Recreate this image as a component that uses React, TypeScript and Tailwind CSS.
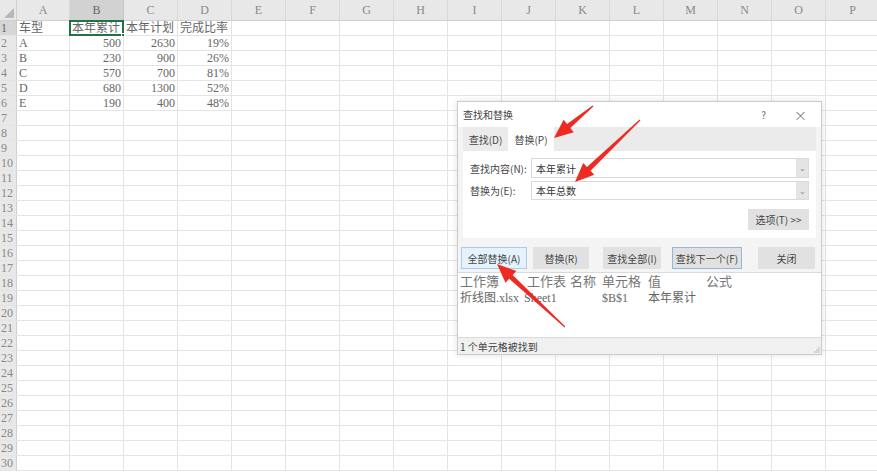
import React from 'react';

const COLS = ['A', 'B', 'C', 'D', 'E', 'F', 'G', 'H', 'I', 'J', 'K', 'L', 'M', 'N', 'O', 'P'];

// cell contents, index 0 = column A
const DATA: Record<number, string[]> = {
  1: ['车型', '本年累计', '本年计划', '完成比率'],
  2: ['A', '500', '2630', '19%'],
  3: ['B', '230', '900', '26%'],
  4: ['C', '570', '700', '81%'],
  5: ['D', '680', '1300', '52%'],
  6: ['E', '190', '400', '48%'],
};

const ROWS = Array.from({ length: 30 }, (_, i) => i + 1);

const arrowPoints = (tx: number, ty: number, px: number, py: number) => {
  const dx = px - tx;
  const dy = py - ty;
  const len = Math.hypot(dx, dy);
  const ux = dx / len;
  const uy = dy / len;
  const nx = -uy;
  const ny = ux;
  const hl = 19;
  const hw = 8;
  const sw = 2.6;
  const bx = px - ux * hl;
  const by = py - uy * hl;
  const pts = [
    [tx + nx * 0.6, ty + ny * 0.6],
    [bx + nx * sw, by + ny * sw],
    [bx + nx * hw, by + ny * hw],
    [px, py],
    [bx - nx * hw, by - ny * hw],
    [bx - nx * sw, by - ny * sw],
    [tx - nx * 0.6, ty - ny * 0.6],
  ];
  return pts.map((p) => p.join(',')).join(' ');
};

const HeaderRow = () => (
  <div className="flex h-[21px] bg-[#e8e8e8] border-b border-[#d0d0d0]">
    <div className="relative w-[17px] shrink-0 border-r border-[#d0d0d0]">
      <svg className="absolute right-[2px] bottom-[2px]" width="10" height="10" viewBox="0 0 10 10">
        <polygon points="10,0 10,10 0,10" fill="#b8b8b8" />
      </svg>
    </div>
    {COLS.map((c) => (
      <div
        key={c}
        className={
          c === 'B'
            ? 'flex w-[54px] shrink-0 items-center justify-center border-r border-[#c4c4c4] bg-[#d2d2d2] text-[12px] text-[#666]'
            : c === 'A'
            ? 'flex w-[53px] shrink-0 items-center justify-center border-r border-[#d8d8d8] text-[12px] text-[#888]'
            : 'flex w-[54px] shrink-0 items-center justify-center border-r border-[#d8d8d8] text-[12px] text-[#888]'
        }
      >
        {c}
      </div>
    ))}
  </div>
);

const GridRow = ({ r }: { r: number }) => {
  const vals = DATA[r] || [];
  return (
    <div className="flex h-[15px] border-b border-[#e4e4e4]">
      <div
        className={
          r === 1
            ? 'flex w-[17px] shrink-0 items-center bg-[#d6d6d6] pl-[1px] text-[12px] leading-none text-[#666] border-r border-[#c8c8c8]'
            : 'flex w-[17px] shrink-0 items-center bg-[#e8e8e8] pl-[1px] text-[12px] leading-none text-[#888] border-r border-[#d0d0d0]'
        }
      >
        {r}
      </div>
      {COLS.map((c, i) => {
        const v = vals[i] ?? '';
        const isNum = r > 1 && i > 0;
        return (
          <div
            key={c}
            className={
              (c === 'A' ? 'w-[53px] ' : 'w-[54px] ') +
              (isNum
                ? 'relative flex shrink-0 items-center justify-end border-r border-[#e4e4e4] pr-[2px] text-[12px] leading-none text-[#666] whitespace-nowrap'
                : 'relative flex shrink-0 items-center border-r border-[#e4e4e4] pl-[2px] text-[12px] leading-none text-[#666] whitespace-nowrap')
            }
          >
            {v}
            {r === 1 && c === 'B' && (
              <div className="absolute -left-[1px] -top-[1px] -right-[1px] -bottom-[1px] border-2 border-[#217346]">
                <div className="absolute -right-[3px] -bottom-[3px] h-[4px] w-[4px] bg-[#217346] border border-white" />
              </div>
            )}
          </div>
        );
      })}
    </div>
  );
};

const Btn = ({ label, w, kind }: { label: string; w: string; kind?: 'active' | 'focus' }) => (
  <div
    className={
      (kind === 'active'
        ? 'bg-[#e5f1fb] border-[#a8cdee] '
        : kind === 'focus'
        ? 'bg-[#e1e1e1] border-[#8fb9e3] '
        : 'bg-[#e1e1e1] border-[#e1e1e1] ') +
      w +
      ' flex h-[22px] items-center justify-center border text-[10px] text-[#444]'
    }
  >
    {label}
  </div>
);

const Field = ({ label, value, h }: { label: string; value: string; h: string }) => (
  <div className="flex items-center">
    <div className="w-[61px] shrink-0 text-[10px] text-[#444]">{label}</div>
    <div className={h + ' flex flex-1 items-center border border-[#d9d9d9] bg-white'}>
      <div className="flex-1 pl-[4px] text-[10px] text-[#333]">{value}</div>
      <div className="flex h-full w-[12px] items-center justify-center bg-[#e4e4e4] text-[8px] text-[#888]">⌄</div>
    </div>
  </div>
);

const Dialog = () => (
  <div className="absolute left-[457px] top-[101px] flex h-[254px] w-[365px] flex-col border border-[#cccccc] bg-[#f4f4f4] font-['Noto_Sans_CJK_SC',sans-serif] shadow-[0_0_6px_rgba(0,0,0,0.12)]">
    <div className="flex h-[25px] items-center bg-white pl-[5px] pr-[14px] text-[10px] text-[#444]">
      <span className="flex-1">查找和替换</span>
      <span className="mr-[28px] text-[10px] text-[#666]">?</span>
      <span className="text-[13px] font-light leading-none text-[#555]">×</span>
    </div>
    <div className="mx-[5px] flex h-[24px] items-end bg-[#ebebeb]">
      <div className="flex h-[24px] w-[45px] items-center justify-center text-[10px] text-[#444]">查找(D)</div>
      <div className="flex h-[24px] w-[46px] items-center justify-center bg-white text-[10px] text-[#444]">替换(P)</div>
    </div>
    <div className="mx-[5px] flex h-[87px] flex-col bg-white px-[7px] pt-[7px]">
      <Field label="查找内容(N):" value="本年累计" h="h-[20px]" />
      <div className="mt-[3px]">
        <Field label="替换为(E):" value="本年总数" h="h-[19px]" />
      </div>
      <div className="mt-[9px] flex justify-end">
        <div className="flex h-[21px] w-[61px] items-center justify-center bg-[#e1e1e1] text-[10px] text-[#444]">选项(T) &gt;&gt;</div>
      </div>
    </div>
    <div className="mt-[9px] flex items-center pl-[3px] pr-[6px]">
      <Btn label="全部替换(A)" w="w-[68px]" kind="active" />
      <div className="ml-[6px]"><Btn label="替换(R)" w="w-[56px]" /></div>
      <div className="ml-[14px]"><Btn label="查找全部(I)" w="w-[58px]" /></div>
      <div className="ml-[11px]"><Btn label="查找下一个(F)" w="w-[70px]" kind="focus" /></div>
      <div className="ml-[16px]"><Btn label="关闭" w="w-[57px]" /></div>
    </div>
    <div className="mt-[3px] flex-1 border-t border-[#dadada] bg-white pl-[2px] pt-[1px] font-['Liberation_Serif','Noto_Sans_CJK_SC',serif] text-[#777]">
      <div className="flex h-[16px] items-center text-[13px]">
        <span className="w-[67px]">工作簿</span>
        <span className="w-[43px]">工作表</span>
        <span className="w-[32px]">名称</span>
        <span className="w-[46px]">单元格</span>
        <span className="w-[58px]">值</span>
        <span>公式</span>
      </div>
      <div className="flex h-[16px] items-center text-[12px] text-[#666]">
        <span className="w-[64px]">折线图.xlsx</span>
        <span className="w-[78px]">Sheet1</span>
        <span className="w-[46px]">$B$1</span>
        <span>本年累计</span>
      </div>
    </div>
    <div className="relative flex h-[17px] items-center border-t border-[#dadada] bg-[#f0f0f0] pl-[2px] text-[10px] text-[#444]">
      1 个单元格被找到
      <svg className="absolute right-[1px] bottom-[1px]" width="7" height="7" viewBox="0 0 7 7">
        <circle cx="6" cy="2" r="0.7" fill="#aaa" />
        <circle cx="6" cy="4" r="0.7" fill="#aaa" />
        <circle cx="4" cy="4" r="0.7" fill="#aaa" />
        <circle cx="6" cy="6" r="0.7" fill="#aaa" />
        <circle cx="4" cy="6" r="0.7" fill="#aaa" />
        <circle cx="2" cy="6" r="0.7" fill="#aaa" />
      </svg>
    </div>
  </div>
);

export default function App() {
  return (
    <div className="relative h-[473px] w-[877px] overflow-hidden bg-white font-['Liberation_Serif','Noto_Sans_CJK_SC',serif]">
      <HeaderRow />
      {ROWS.map((r) => (
        <GridRow key={r} r={r} />
      ))}
      <Dialog />
      {/* red annotation arrows */}
      <svg className="pointer-events-none absolute left-0 top-0" width="877" height="473">
        <polygon points={arrowPoints(593, 106, 554, 138)} fill="#ee2a22" />
        <polygon points={arrowPoints(640, 120, 575, 182)} fill="#ee2a22" />
        <polygon points={arrowPoints(565, 327, 497, 264)} fill="#ee2a22" />
      </svg>
    </div>
  );
}
